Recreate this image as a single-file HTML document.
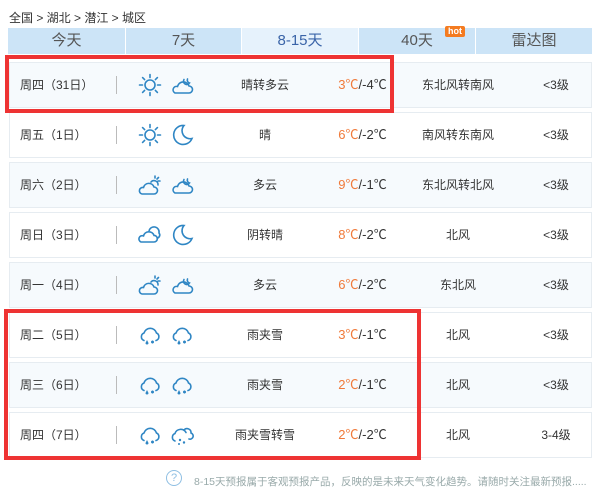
<!DOCTYPE html>
<html><head><meta charset="utf-8"><style>
*{margin:0;padding:0;box-sizing:border-box}
body{width:600px;height:499px;background:#fff;font-family:"Liberation Sans","Noto Sans CJK SC",sans-serif;color:#333;position:relative;overflow:hidden;font-size:12px}
.crumb{position:absolute;left:9px;top:9px;font-size:12px;color:#333}
.tab{position:absolute;top:28px;height:26px;background:#cce4f7;text-align:center;line-height:26px;font-size:15px;color:#555}
.tab.on{background:#e6f2fc;color:#3a64a8}
.hot{position:absolute;left:86px;top:-2px;background:#f47b20;color:#fff;font-size:9px;line-height:11px;padding:0 3px;border-radius:2px;font-weight:bold}
.row{position:absolute;left:9px;width:583px;height:46px;border:1px solid #e6ecf1;background:#fff}
.row.alt{background:#f6fafd}
.row span{position:absolute;top:0;line-height:44px;font-size:12px;color:#333;white-space:nowrap}
.d{left:10px}
.sep{position:absolute;left:106px;top:13px;width:1px;height:18px;background:#bbb}
.desc{left:200px;width:110px;text-align:center}
.t{left:300px;width:105px;text-align:center;font-size:13px!important}
.t b{font-weight:normal;color:#f07a3a}
.w{left:398px;width:100px;text-align:center}
.l{left:510px;width:72px;text-align:center}
.row svg{position:absolute;top:10px}
.red{position:absolute;border:4px solid #ee3333}
.note{position:absolute;top:474px;left:194px;font-size:10.5px;color:#9aa;white-space:nowrap}
.q{position:absolute;left:166px;top:470px;width:16px;height:16px;border:1px solid #8fbfe3;border-radius:50%;color:#8fbfe3;font-size:11px;text-align:center;line-height:14px}
</style></head><body>
<svg width="0" height="0" style="position:absolute">
<defs>
<symbol id="sun" viewBox="0 0 24 24"><g fill="none" stroke="#2f86c4" stroke-width="1.6" stroke-linecap="round"><circle cx="12" cy="12" r="5"/><path d="M12 1.5v3M12 19.5v3M1.5 12h3M19.5 12h3M4.6 4.6l2 2M17.4 17.4l2 2M4.6 19.4l2-2M17.4 6.6l2-2"/></g></symbol>
<symbol id="cloud" viewBox="0 0 24 24"><g fill="none" stroke="#2f86c4" stroke-width="1.6" stroke-linecap="round"><path d="M5 20h14a3.5 3.5 0 0 0 0-7a6 6 0 0 0-11.5 0.5A3.5 3.5 0 0 0 5 20z"/><path d="M14 6.5a3 3 0 0 0 5.5 3.5a3 3 0 0 1-2-4"/></g></symbol>
<symbol id="moon" viewBox="0 0 24 24"><path d="M14 2.5a9.5 9.5 0 1 0 8 13a8 8 0 0 1-8-13z" fill="none" stroke="#2f86c4" stroke-width="1.6"/></symbol>
<symbol id="pc" viewBox="0 0 24 24"><g fill="none" stroke="#2f86c4" stroke-width="1.6" stroke-linecap="round"><path d="M4 21h12a3.5 3.5 0 0 0 0-7a5.5 5.5 0 0 0-10.5 0.5A3.3 3.3 0 0 0 4 21z"/><path d="M13 9a4 4 0 0 1 7 3M17 3v2M22 8h-2M20.5 4.5l-1.5 1.5"/></g></symbol>
<symbol id="ov" viewBox="0 0 24 24"><g fill="none" stroke="#2f86c4" stroke-width="1.6"><path d="M3 19h13a3.3 3.3 0 0 0 0-6.6a5.5 5.5 0 0 0-10.5 0.5A3 3 0 0 0 3 19z"/><path d="M11 8a5 5 0 0 1 10 2a3 3 0 0 1-2.5 5"/></g></symbol>
<symbol id="rs" viewBox="0 0 24 24"><g fill="none" stroke="#2f86c4" stroke-width="1.6" stroke-linecap="round"><path d="M6 17.5A4 4 0 0 1 6 10a6.5 6.5 0 0 1 12.5 0a4 4 0 0 1-0.5 7.5"/></g><path d="M9 17l1.5 3a1.5 1.5 0 0 1-3 0z" fill="#2f86c4"/><g stroke="#2f86c4" stroke-width="1.2"><path d="M13 19h3M14.5 17.5v3M13.5 18l2 2M15.5 18l-2 2"/></g></symbol>
<symbol id="sn" viewBox="0 0 24 24"><g fill="none" stroke="#2f86c4" stroke-width="1.6" stroke-linecap="round"><path d="M5 18A4 4 0 0 1 5 10.5a6 6 0 0 1 11 -1"/><path d="M14 7a4 4 0 0 1 7 3a3 3 0 0 1-2 6"/></g><circle cx="10" cy="17" r="1.2" fill="#2f86c4"/><circle cx="14" cy="19.5" r="1.2" fill="#2f86c4"/><circle cx="9" cy="21" r="1" fill="#2f86c4"/></symbol>
</defs></svg>

<div class="crumb">全国 &gt; 湖北 &gt; 潜江 &gt; 城区</div>
<div class="tab" style="left:8px;width:117px">今天</div>
<div class="tab" style="left:126px;width:115px">7天</div>
<div class="tab on" style="left:242px;width:116px">8-15天</div>
<div class="tab" style="left:359px;width:116px">40天<span class="hot">hot</span></div>
<div class="tab" style="left:476px;width:116px">雷达图</div>

<div class="row alt" style="top:62px"><span class="d">周四（31日）</span><i class="sep"></i><svg style="left:128px" width="24" height="24"><use href="#sun"/></svg><svg style="left:160px" width="24" height="24"><use href="#cloud"/></svg><span class="desc">晴转多云</span><span class="t"><b>3℃</b>/-4℃</span><span class="w">东北风转南风</span><span class="l">&lt;3级</span></div>
<div class="row" style="top:112px"><span class="d">周五（1日）</span><i class="sep"></i><svg style="left:128px" width="24" height="24"><use href="#sun"/></svg><svg style="left:160px" width="24" height="24"><use href="#moon"/></svg><span class="desc">晴</span><span class="t"><b>6℃</b>/-2℃</span><span class="w">南风转东南风</span><span class="l">&lt;3级</span></div>
<div class="row alt" style="top:162px"><span class="d">周六（2日）</span><i class="sep"></i><svg style="left:128px" width="24" height="24"><use href="#pc"/></svg><svg style="left:160px" width="24" height="24"><use href="#cloud"/></svg><span class="desc">多云</span><span class="t"><b>9℃</b>/-1℃</span><span class="w">东北风转北风</span><span class="l">&lt;3级</span></div>
<div class="row" style="top:212px"><span class="d">周日（3日）</span><i class="sep"></i><svg style="left:128px" width="24" height="24"><use href="#ov"/></svg><svg style="left:160px" width="24" height="24"><use href="#moon"/></svg><span class="desc">阴转晴</span><span class="t"><b>8℃</b>/-2℃</span><span class="w">北风</span><span class="l">&lt;3级</span></div>
<div class="row alt" style="top:262px"><span class="d">周一（4日）</span><i class="sep"></i><svg style="left:128px" width="24" height="24"><use href="#pc"/></svg><svg style="left:160px" width="24" height="24"><use href="#cloud"/></svg><span class="desc">多云</span><span class="t"><b>6℃</b>/-2℃</span><span class="w">东北风</span><span class="l">&lt;3级</span></div>
<div class="row" style="top:312px"><span class="d">周二（5日）</span><i class="sep"></i><svg style="left:128px" width="24" height="24"><use href="#rs"/></svg><svg style="left:160px" width="24" height="24"><use href="#rs"/></svg><span class="desc">雨夹雪</span><span class="t"><b>3℃</b>/-1℃</span><span class="w">北风</span><span class="l">&lt;3级</span></div>
<div class="row alt" style="top:362px"><span class="d">周三（6日）</span><i class="sep"></i><svg style="left:128px" width="24" height="24"><use href="#rs"/></svg><svg style="left:160px" width="24" height="24"><use href="#rs"/></svg><span class="desc">雨夹雪</span><span class="t"><b>2℃</b>/-1℃</span><span class="w">北风</span><span class="l">&lt;3级</span></div>
<div class="row" style="top:412px"><span class="d">周四（7日）</span><i class="sep"></i><svg style="left:128px" width="24" height="24"><use href="#rs"/></svg><svg style="left:160px" width="24" height="24"><use href="#sn"/></svg><span class="desc">雨夹雪转雪</span><span class="t"><b>2℃</b>/-2℃</span><span class="w">北风</span><span class="l">3-4级</span></div>

<div class="red" style="left:5px;top:55px;width:389px;height:58px"></div>
<div class="red" style="left:4px;top:309px;width:417px;height:151px"></div>

<div class="q">?</div>
<div class="note">8-15天预报属于客观预报产品，反映的是未来天气变化趋势。请随时关注最新预报.....</div>
</body></html>
